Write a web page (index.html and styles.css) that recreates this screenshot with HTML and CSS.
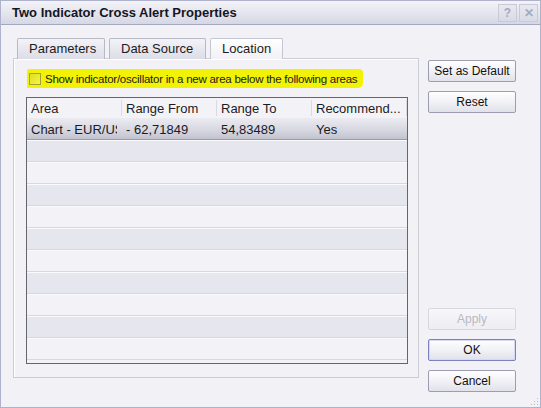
FILE: index.html
```html
<!DOCTYPE html>
<html lang="en">
<head>
  <meta charset="UTF-8">
  <title>Two Indicator Cross Alert Properties</title>
  <link rel="stylesheet" href="styles.css">
</head>
<body>
  <div class="dialog">
    <div class="dialog-title">
      <span class="dialog-title-text">Two Indicator Cross Alert Properties</span>
      <span class="title-btn">?</span>
      <span class="title-btn">&#x2715;</span>
    </div>
    <div class="dialog-body">
      <div class="dialog-main">
        <div class="tabs">
          <span class="tab">Parameters</span>
          <span class="tab">Data Source</span>
          <span class="tab active">Location</span>
        </div>
        <div class="tab-panel">
          <label class="check-row">
            <span class="check-box"></span>
            <span class="check-label">Show indicator/oscillator in a new area below the following areas</span>
          </label>
          <div class="grid">
            <div class="grid-row grid-head">
              <div class="cell">Area</div>
              <div class="cell">Range From</div>
              <div class="cell">Range To</div>
              <div class="cell">Recommend...</div>
            </div>
            <div class="grid-row selected">
              <div class="cell"><span class="cell-text">Chart - EUR/USD</span></div>
              <div class="cell">- 62,71849</div>
              <div class="cell">54,83489</div>
              <div class="cell">Yes</div>
            </div>
            <div class="grid-row odd"></div>
            <div class="grid-row"></div>
            <div class="grid-row odd"></div>
            <div class="grid-row"></div>
            <div class="grid-row odd"></div>
            <div class="grid-row"></div>
            <div class="grid-row odd"></div>
            <div class="grid-row"></div>
            <div class="grid-row odd"></div>
            <div class="grid-row"></div>
          </div>
        </div>
      </div>
      <div class="dialog-side">
        <button class="btn">Set as Default</button>
        <button class="btn">Reset</button>
        <div class="side-spacer"></div>
        <button class="btn" disabled>Apply</button>
        <button class="btn default">OK</button>
        <button class="btn">Cancel</button>
      </div>
    </div>
    <svg class="grip" width="8" height="8" viewBox="0 0 8 8">
      <rect x="6" y="0" width="1" height="1" fill="#b8b8c8"/>
      <rect x="3" y="3" width="1" height="1" fill="#b8b8c8"/>
      <rect x="6" y="3" width="1" height="1" fill="#b8b8c8"/>
      <rect x="0" y="6" width="1" height="1" fill="#b8b8c8"/>
      <rect x="3" y="6" width="1" height="1" fill="#b8b8c8"/>
      <rect x="6" y="6" width="1" height="1" fill="#b8b8c8"/>
    </svg>
  </div>
</body>
</html>
```

FILE: styles.css
```css
*{
  margin: 0;
  padding: 0;
  box-sizing: border-box;
}
body{
  background: #f1f1f6;
  font: 13px "Liberation Sans", Arial, sans-serif;
  color: #1b1b24;
}
.dialog{
  position: relative;
  width: 541px;
  height: 408px;
  border: 1px solid #aeb2cc;
  background: #f1f1f6;
}
.dialog-title{
  display: flex;
  align-items: center;
  height: 24px;
  padding: 0 2px 0 11px;
  background: linear-gradient(#f3f3f8, #e2e3ec 60%, #d5d7e4);
  border-bottom: 1px solid #a3a7c0;
}
.dialog-title-text{
  flex: 1;
  font-weight: bold;
  font-size: 13px;
  color: #15151f;
}
.title-btn{
  width: 19px;
  height: 18px;
  margin-left: 2px;
  border: 1px solid #c8cad8;
  background: linear-gradient(#e8e9f0, #d8dae6);
  color: #a6a9bd;
  font-weight: bold;
  font-size: 12px;
  text-align: center;
  line-height: 16px;
}
.dialog-body{
  display: flex;
  padding: 13px 0 0 12px;
}
.dialog-main{
  width: 406px;
}
.tabs{
  display: flex;
  gap: 4px;
  padding-left: 4px;
  height: 20px;
}
.tab{
  padding: 0 11px;
  height: 21px;
  line-height: 20px;
  border: 1px solid #b7b9c9;
  border-bottom: none;
  border-radius: 2px 2px 0 0;
  background: linear-gradient(#f3f3f7, #dcdde6);
  color: #1b1b24;
}
.tab:nth-child(1){ width: 88px; }
.tab:nth-child(2){ width: 97px; }
.tab.active{
  width: 73px;
  position: relative;
  z-index: 1;
  background: linear-gradient(#ffffff, #f1f1f6);
  border-color: #c4c6d4;
  height: 21px;
}
.tab-panel{
  height: 320px;
  border: 1px solid #cdcdd6;
  box-shadow: inset 1px 1px 0 #fff;
  padding: 10px 10px 0 12px;
}
.check-row{
  display: flex;
  align-items: center;
  width: 336px;
  height: 19px;
  margin-left: 1px;
  padding-left: 2px;
  background: #f2f207;
  border-radius: 2px 4px 5px 1px;
}
.check-box{
  flex: none;
  width: 12px;
  height: 12px;
  border: 1px solid #a2a23a;
  background: linear-gradient(135deg, #dede28, #f6f640);
  margin-right: 4px;
}
.check-label{
  font-size: 11.5px;
  letter-spacing: -0.25px;
  white-space: nowrap;
  color: #1b1b10;
}
.grid{
  margin-top: 9px;
  height: 267px;
  border: 1px solid #65656d;
  overflow: hidden;
  background: #f3f3f7;
}
.grid-row{
  display: flex;
  height: 22px;
  border-bottom: 1px solid #d7d7df;
  box-shadow: inset 0 1px 0 #fafafc;
  background: #f3f3f7;
}
.grid-row.odd{
  background: #e6e6ee;
}
.grid-head{
  height: 20px;
  border-bottom: none;
  box-shadow: none;
}
.grid-head .cell{
  border-right: 1px solid #d9d9e1;
  height: 16px;
  margin-top: 2px;
  line-height: 18px;
}
.grid-row.selected{
  background: linear-gradient(#ebebf1, #d6d6e0 60%, #c3c3cf);
  border-bottom: 1px solid #9a9aa9;
  box-shadow: none;
}
.grid-row.selected .cell{
  line-height: 24px;
}
.cell{
  flex: none;
  width: 95px;
  padding-left: 4px;
  line-height: 21px;
  white-space: nowrap;
  overflow: hidden;
}
.cell-text{
  display: block;
  width: 86px;
  overflow: hidden;
}
.dialog-side{
  display: flex;
  flex-direction: column;
  padding: 22px 0 0 9px;
  height: 363px;
}
.btn{
  width: 88px;
  height: 22px;
  margin-bottom: 9px;
  font: 12px "Liberation Sans", Arial, sans-serif;
  color: #111;
  border: 1px solid #9c9db2;
  border-radius: 2px;
  background: linear-gradient(#ffffff, #f1f1f6 50%, #e1e2ea);
}
.btn.default{
  border-color: #7b7fc4;
  box-shadow: inset 0 0 0 1px #d6d8f4;
}
.btn:disabled{
  color: #b8b8c4;
  border-color: #d6d7e0;
  background: linear-gradient(#f7f7fa, #ededf2);
}
.side-spacer{
  flex: 1;
}
.grip{
  position: absolute;
  right: 1px;
  bottom: 1px;
}
```
